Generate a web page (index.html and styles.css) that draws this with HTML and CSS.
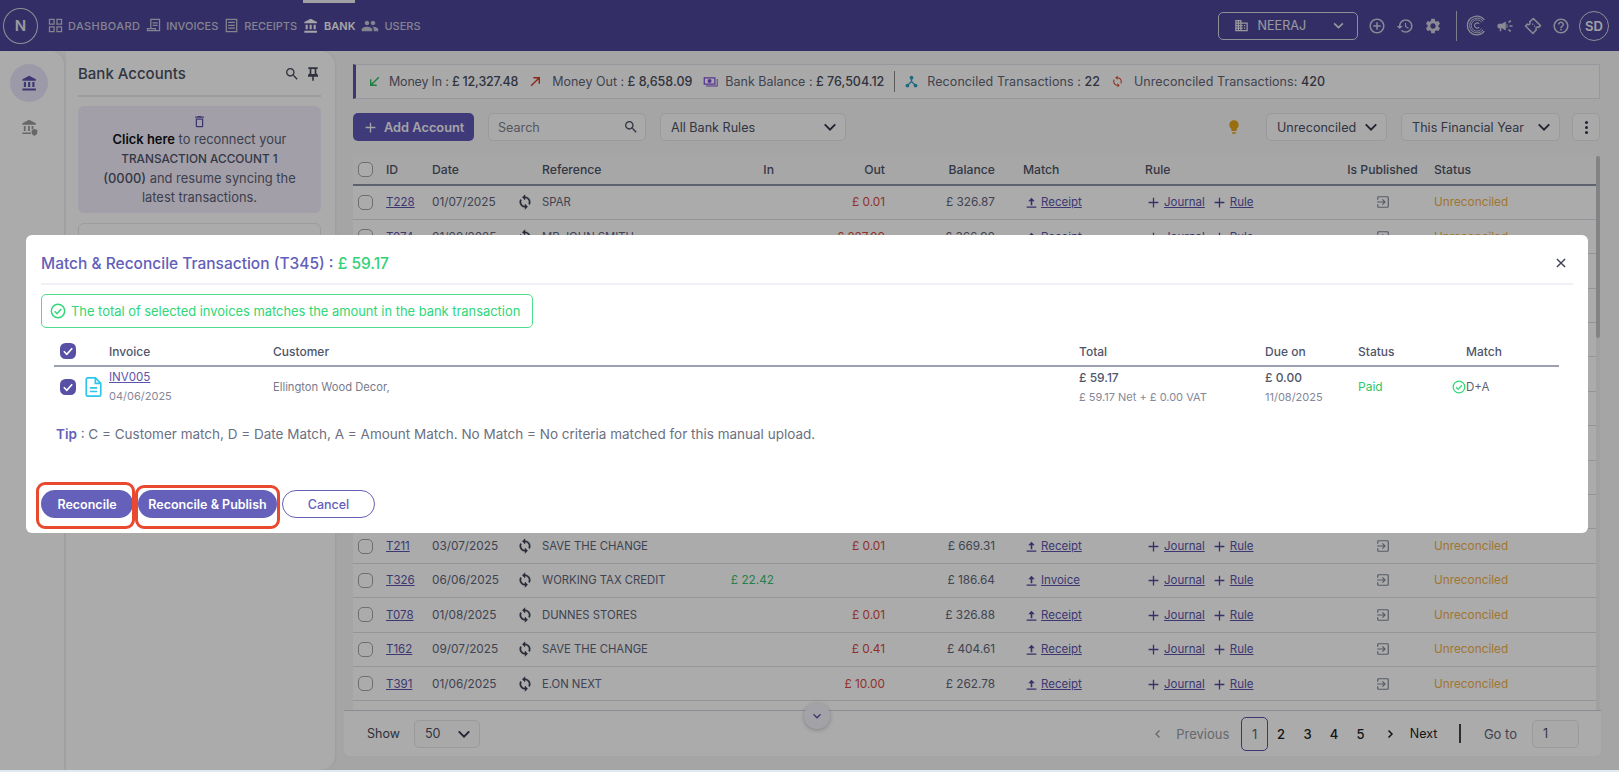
FILE: index.html
```html
<!DOCTYPE html>
<html lang="en">
<head>
<meta charset="utf-8">
<title>Bank - Match and Reconcile</title>
<link rel="stylesheet" href="styles.css">
</head>
<body>
<svg class="sprite" xmlns="http://www.w3.org/2000/svg">
  <symbol id="i-dash" viewBox="0 0 18 18"><path d="M1 1h7v7H1zM2.500 2.500v4h4v-4zM10 1h7v7h-7zM11.500 2.500v4h4v-4zM1 10h7v7H1zM2.500 11.500v4h4v-4zM10 10h7v7h-7zM11.500 11.500v4h4v-4z" fill-rule="evenodd"/></symbol>
  <symbol id="i-inv" viewBox="0 0 18 18"><path d="M5 1h12v15H1v-4h4zM6.500 2.500V12H12v2.500h3.500v-12zM8 5h6v1.500H8zM8 8h6v1.500H8zM2.500 13.500V14.500H10.500V13.500z" fill-rule="evenodd"/></symbol>
  <symbol id="i-rec" viewBox="0 0 18 18"><path d="M2 1h14v16H2zM3.500 2.500v13h11v-13zM5 4.500h8V6H5zM5 8h8v1.500H5zM5 11.500h8V13H5z" fill-rule="evenodd"/></symbol>
  <symbol id="i-bank" viewBox="0 0 24 24"><path d="M4 10v7h3v-7H4zm6 0v7h3v-7h-3zM2 22h19v-3H2v3zm14-12v7h3v-7h-3zm-4.500-9L2 6v2h19V6l-9.500-5z"/></symbol>
  <symbol id="i-bank2" viewBox="0 0 24 24"><path d="M4 10v7h2.500v-7H4zm6 0v7h2.500v-7H10zM2 21h12v-2H2v2zm13-11v4h2.500v-4H15zm-3.500-9L2 6v2h19V6l-9.500-5z"/><path d="M19 14l4 1.400v3.200c0 2.400-1.700 4.200-4 5-2.300-.8-4-2.600-4-5v-3.200z"/></symbol>
  <symbol id="i-group" viewBox="0 0 24 24"><path d="M16 11c1.660 0 2.990-1.340 2.990-3S17.660 5 16 5c-1.660 0-3 1.340-3 3s1.340 3 3 3zm-8 0c1.660 0 2.990-1.340 2.990-3S9.660 5 8 5C6.340 5 5 6.340 5 8s1.340 3 3 3zm0 2c-2.330 0-7 1.170-7 3.500V19h14v-2.500c0-2.330-4.670-3.500-7-3.500zm8 0c-.29 0-.62.02-.97.05 1.160.84 1.970 1.970 1.970 3.450V19h6v-2.500c0-2.330-4.670-3.500-7-3.500z"/></symbol>
  <symbol id="i-domain" viewBox="0 0 24 24"><path d="M12 7V3H2v18h20V7H12zM6 19H4v-2h2v2zm0-4H4v-2h2v2zm0-4H4V9h2v2zm0-4H4V5h2v2zm4 12H8v-2h2v2zm0-4H8v-2h2v2zm0-4H8V9h2v2zm0-4H8V5h2v2zm10 12h-8v-2h2v-2h-2v-2h2v-2h-2V9h8v10zm-2-8h-2v2h2v-2zm0 4h-2v2h2v-2z"/></symbol>
  <symbol id="i-addc" viewBox="0 0 24 24"><path d="M13 7h-2v4H7v2h4v4h2v-4h4v-2h-4V7zm-1-5C6.480 2 2 6.480 2 12s4.480 10 10 10 10-4.480 10-10S17.520 2 12 2zm0 18c-4.410 0-8-3.590-8-8s3.590-8 8-8 8 3.590 8 8-3.590 8-8 8z"/></symbol>
  <symbol id="i-hist" viewBox="0 0 24 24"><path d="M13 3c-4.970 0-9 4.030-9 9H1l3.890 3.890.07.14L9 12H6c0-3.870 3.130-7 7-7s7 3.130 7 7-3.130 7-7 7c-1.930 0-3.680-.79-4.940-2.060l-1.420 1.420C8.270 19.990 10.510 21 13 21c4.970 0 9-4.030 9-9s-4.030-9-9-9zm-1 5v5l4.280 2.540.72-1.210-3.500-2.080V8H12z"/></symbol>
  <symbol id="i-gear" viewBox="0 0 24 24"><path d="M19.140 12.940c.04-.3.06-.61.06-.94 0-.32-.02-.64-.07-.94l2.030-1.580c.18-.14.23-.41.12-.61l-1.920-3.320c-.12-.22-.37-.29-.59-.22l-2.390.96c-.5-.38-1.030-.7-1.620-.94l-.36-2.540c-.04-.24-.24-.41-.48-.41h-3.840c-.24 0-.43.17-.47.41l-.36 2.540c-.59.24-1.130.57-1.620.94l-2.390-.96c-.22-.08-.47 0-.59.22L2.740 8.870c-.12.21-.08.47.12.61l2.030 1.580c-.05.3-.09.63-.09.94s.02.64.07.94l-2.030 1.580c-.18.14-.23.41-.12.61l1.920 3.320c.12.22.37.29.59.22l2.390-.96c.5.38 1.030.7 1.620.94l.36 2.540c.05.24.24.41.48.41h3.840c.24 0 .44-.17.47-.41l.36-2.540c.59-.24 1.130-.56 1.620-.94l2.390.96c.22.08.47 0 .59-.22l1.920-3.320c.12-.22.07-.47-.12-.61l-2.010-1.580zM12 15.600c-1.980 0-3.600-1.620-3.600-3.600s1.620-3.600 3.600-3.600 3.600 1.620 3.600 3.600-1.620 3.600-3.600 3.600z"/></symbol>
  <symbol id="i-coin" viewBox="0 0 24 24"><g fill="none" stroke="currentColor"><path d="M21 5.500A10.800 10.800 0 1 0 21 18.500" stroke-width="1.400"/><path d="M19.500 7A8.500 8.500 0 1 0 19.500 17" stroke-width="1.100"/><path d="M18 8.500A6.500 6.500 0 1 0 18 15.500" stroke-width="1"/><path d="M15 10a3 3 0 1 0 0 4" stroke-width="1.300"/></g></symbol>
  <symbol id="i-mega" viewBox="0 0 24 24"><path d="M18 11v2h4v-2h-4zm-2 6.610c.96.71 2.210 1.650 3.200 2.390.4-.53.8-1.070 1.200-1.600-.99-.74-2.240-1.680-3.200-2.400-.4.54-.8 1.080-1.200 1.610zM20.400 5.600c-.4-.53-.8-1.070-1.200-1.600-.99.74-2.240 1.680-3.200 2.400.4.530.8 1.070 1.200 1.600.96-.72 2.210-1.650 3.200-2.400zM4 9c-1.100 0-2 .9-2 2v2c0 1.100.9 2 2 2h1v4h2v-4h1l5 3V6L8 9H4zm11.500 3c0-1.330-.58-2.530-1.500-3.350v6.690c.92-.81 1.500-2.010 1.500-3.340z"/></symbol>
  <symbol id="i-tick" viewBox="0 0 24 24"><g fill="none" stroke="currentColor" stroke-width="2" stroke-linejoin="round"><path d="M12.500 2l9.500 9.500-2.500 2.500a2 2 0 0 0-3 3L14 19.500l-2 2.500L2 12l2.500-2.500a2 2 0 0 0 3-3z"/><path d="M11 9l1.200 1.200M13.500 11.500l1.200 1.200" stroke-width="1.600"/></g></symbol>
  <symbol id="i-help" viewBox="0 0 24 24"><path d="M11 18h2v-2h-2v2zm1-16C6.480 2 2 6.480 2 12s4.480 10 10 10 10-4.480 10-10S17.520 2 12 2zm0 18c-4.410 0-8-3.590-8-8s3.590-8 8-8 8 3.590 8 8-3.590 8-8 8zm0-14c-2.210 0-4 1.790-4 4h2c0-1.100.9-2 2-2s2 .9 2 2c0 2-3 1.750-3 5h2c0-2.250 3-2.500 3-5 0-2.210-1.790-4-4-4z"/></symbol>
  <symbol id="i-search" viewBox="0 0 24 24"><path d="M15.500 14h-.79l-.28-.27C15.410 12.590 16 11.110 16 9.500 16 5.910 13.090 3 9.500 3S3 5.910 3 9.500 5.910 16 9.500 16c1.610 0 3.090-.59 4.230-1.570l.27.28v.79l5 4.990L20.490 19l-4.990-5zm-6 0C7.010 14 5 11.990 5 9.500S7.010 5 9.500 5 14 7.010 14 9.500 11.990 14 9.500 14z"/></symbol>
  <symbol id="i-pin" viewBox="0 0 24 24"><path d="M5 2h14v2.500h-2V11l2.500 2.500V16h-6.300v6h-2.400v-6H4.500v-2.500L7 11V4.500H5zM9.500 4.500V12h5V4.500z" fill-rule="evenodd"/></symbol>
  <symbol id="i-trash" viewBox="0 0 24 24"><path d="M6 19c0 1.100.9 2 2 2h8c1.100 0 2-.9 2-2V7H6v12zM8 9h8v10H8V9zm7.500-5l-1-1h-5l-1 1H5v2h14V4z"/></symbol>
  <symbol id="i-sync" viewBox="0 0 24 24"><path d="M12 4V1L8 5l4 4V6c3.310 0 6 2.690 6 6 0 1.010-.25 1.970-.7 2.800l1.460 1.460C19.540 15.030 20 13.570 20 12c0-4.420-3.580-8-8-8zm0 14c-3.310 0-6-2.690-6-6 0-1.010.25-1.970.7-2.800L5.240 7.740C4.460 8.970 4 10.430 4 12c0 4.420 3.580 8 8 8v3l4-4-4-4v3z"/></symbol>
  <symbol id="i-up" viewBox="0 0 24 24"><path d="M3 19.500h18v2.200H3zM12 3l6 6.500h-4.500V17h-3V9.500H6z"/></symbol>
  <symbol id="i-plus" viewBox="0 0 24 24"><path d="M10.800 3h2.400v7.800H21v2.400h-7.800V21h-2.400v-7.800H3v-2.400h7.800z"/></symbol>
  <symbol id="i-login" viewBox="0 0 24 24"><g fill="none" stroke="currentColor" stroke-width="2"><path d="M3 8V4.500A1.500 1.500 0 0 1 4.500 3h15A1.500 1.500 0 0 1 21 4.500v15a1.500 1.500 0 0 1-1.500 1.500h-15A1.500 1.500 0 0 1 3 19.500V16"/><path d="M2 12h13M11 7.500l4.500 4.500-4.500 4.500"/></g></symbol>
  <symbol id="i-chev" viewBox="0 0 24 24"><path d="M5 8.500l7 7 7-7" fill="none" stroke="currentColor" stroke-width="2.600"/></symbol>
  <symbol id="i-check" viewBox="0 0 24 24"><g fill="none" stroke="currentColor" stroke-width="2.200"><circle cx="12" cy="12" r="10"/><path d="M7 12.500l3.500 3.500 6.500-7"/></g></symbol>
  <symbol id="i-tbox" viewBox="0 0 16 16"><rect x="0" y="0" width="16" height="16" rx="5.500" fill="#5750a4"/><path d="M3.800 8.300l3 3 5.400-6" fill="none" stroke="#fff" stroke-width="1.600"/></symbol>
</svg>

<div class="app">
  <header class="topbar">
    <div class="logo">N</div>
    <nav class="nav">
      <a class="nav-item nav-first"><svg class="nav-ic"><use href="#i-dash"/></svg>DASHBOARD</a>
      <a class="nav-item"><svg class="nav-ic"><use href="#i-inv"/></svg>INVOICES</a>
      <a class="nav-item"><svg class="nav-ic"><use href="#i-rec"/></svg>RECEIPTS</a>
      <a class="nav-item nav-active"><svg class="nav-ic"><use href="#i-bank"/></svg>BANK</a>
      <a class="nav-item"><svg class="nav-ic nav-ic-wide"><use href="#i-group"/></svg>USERS</a>
    </nav>
    <div class="top-right">
      <div class="org-select">
        <svg class="org-ic"><use href="#i-domain"/></svg>
        <span class="org-name">NEERAJ</span>
        <svg class="org-chev"><use href="#i-chev"/></svg>
      </div>
      <svg class="top-ic"><use href="#i-addc"/></svg>
      <svg class="top-ic"><use href="#i-hist"/></svg>
      <svg class="top-ic"><use href="#i-gear"/></svg>
      <span class="top-div"></span>
      <svg class="top-ic top-ic-coin"><use href="#i-coin"/></svg>
      <svg class="top-ic"><use href="#i-mega"/></svg>
      <svg class="top-ic"><use href="#i-tick"/></svg>
      <svg class="top-ic"><use href="#i-help"/></svg>
      <div class="avatar">SD</div>
    </div>
  </header>

  <div class="body-row">
    <aside class="rail">
      <div class="rail-on"><svg class="rail-ic"><use href="#i-bank"/></svg></div>
      <svg class="rail-ic rail-off"><use href="#i-bank2"/></svg>
    </aside>

    <section class="accounts">
      <div class="acc-head">
        <h2 class="acc-title">Bank Accounts</h2>
        <svg class="acc-ic"><use href="#i-search"/></svg>
        <svg class="acc-ic"><use href="#i-pin"/></svg>
      </div>
      <div class="callout">
        <svg class="callout-ic"><use href="#i-trash"/></svg>
        <p class="callout-text"><b>Click here</b> to reconnect your<br><span class="callout-strong">TRANSACTION ACCOUNT 1</span><br><span class="callout-zero">(0000)</span> and resume syncing the<br>latest transactions.</p>
      </div>
      <div class="acc-card"></div>
    </section>

    <main class="main">
      <div class="stats">
        <svg class="st-ic st-in" viewBox="0 0 24 24"><path d="M20 4L5 19M5 8v11h11" fill="none" stroke="currentColor" stroke-width="2.600"/></svg>
        <span class="st-text st-first">Money In : <b>£ 12,327.48</b></span>
        <svg class="st-ic st-out" viewBox="0 0 24 24"><path d="M4 20L19 5M8 5h11v11" fill="none" stroke="currentColor" stroke-width="2.600"/></svg>
        <span class="st-text">Money Out : <b>£ 8,658.09</b></span>
        <svg class="st-ic st-bal" viewBox="0 0 24 24"><path d="M1 5h19v12H1zM3 7v8h15V7zM22 8h1.500v12H5v-1.500h17z" fill-rule="evenodd"/><circle cx="10.500" cy="11" r="3.200"/></svg>
        <span class="st-text">Bank Balance : <b>£ 76,504.12</b></span>
        <span class="st-div"></span>
        <svg class="st-ic st-hub" viewBox="0 0 24 24"><path d="M12 5v7M12 12l-7 7M12 12l7 7" fill="none" stroke="currentColor" stroke-width="2.400"/><circle cx="12" cy="5" r="3.500"/><circle cx="4.500" cy="19.500" r="3.500"/><circle cx="19.500" cy="19.500" r="3.500"/></svg>
        <span class="st-text st-wide">Reconciled Transactions : <b>22</b></span>
        <svg class="st-ic st-unrec" viewBox="0 0 24 24"><path d="M12 4V1L8 5l4 4V6c3.310 0 6 2.690 6 6 0 1.010-.25 1.970-.7 2.800l1.460 1.460C19.540 15.030 20 13.570 20 12c0-4.420-3.580-8-8-8zm0 14c-3.310 0-6-2.690-6-6 0-1.010.25-1.970.7-2.800L5.240 7.740C4.460 8.970 4 10.430 4 12c0 4.420 3.580 8 8 8v3l4-4-4-4v3z"/></svg>
        <span class="st-text st-wide">Unreconciled Transactions: <b>420</b></span>
      </div>

      <div class="toolbar">
        <button class="add-btn"><svg class="add-ic"><use href="#i-plus"/></svg>Add Account</button>
        <div class="field field-search"><span class="ph">Search</span><svg class="field-ic"><use href="#i-search"/></svg></div>
        <div class="field field-rules"><span>All Bank Rules</span><svg class="field-chev"><use href="#i-chev"/></svg></div>
        <svg class="bulb" viewBox="0 0 24 24"><path d="M9 21c0 .55.45 1 1 1h4c.55 0 1-.45 1-1v-1H9v1zm3-19C8.140 2 5 5.140 5 9c0 2.380 1.190 4.470 3 5.740V17c0 .55.45 1 1 1h6c.55 0 1-.45 1-1v-2.260c1.810-1.270 3-3.360 3-5.740 0-3.860-3.140-7-7-7z"/></svg>
        <div class="field field-status"><span>Unreconciled</span><svg class="field-chev"><use href="#i-chev"/></svg></div>
        <div class="field field-year"><span>This Financial Year</span><svg class="field-chev"><use href="#i-chev"/></svg></div>
        <div class="field field-more"><span class="dots"></span></div>
      </div>

      <div class="table-wrap">
        <div class="table-scroll">
          <table class="tx">
            <colgroup>
              <col class="c-chk"><col class="c-id"><col class="c-date"><col class="c-sync"><col class="c-ref"><col class="c-in"><col class="c-out"><col class="c-bal"><col class="c-match"><col class="c-rule"><col class="c-pub"><col class="c-stat">
            </colgroup>
            <thead>
              <tr><th class="td-chk"><span class="box"></span></th><th>ID</th><th>Date</th><th></th><th>Reference</th><th class="num">In</th><th class="num">Out</th><th class="num">Balance</th><th class="td-match">Match</th><th>Rule</th><th class="ctr">Is Published</th><th>Status</th></tr>
            </thead>
            <tbody>
              <tr><td class="td-chk"><span class="box"></span></td><td><a class="lnk">T228</a></td><td>01/07/2025</td><td><svg class="sync"><use href="#i-sync"/></svg></td><td class="ref">SPAR</td><td class="num"></td><td class="num out">£ 0.01</td><td class="num">£ 326.87</td><td class="td-match"><svg class="mini"><use href="#i-up"/></svg><a class="lnk">Receipt</a></td><td class="td-rule"><svg class="mini"><use href="#i-plus"/></svg><a class="lnk lnk-j">Journal</a><svg class="mini"><use href="#i-plus"/></svg><a class="lnk">Rule</a></td><td class="ctr"><svg class="pub"><use href="#i-login"/></svg></td><td class="unrec">Unreconciled</td></tr>
              <tr><td class="td-chk"><span class="box"></span></td><td><a class="lnk">T074</a></td><td>01/08/2025</td><td><svg class="sync"><use href="#i-sync"/></svg></td><td class="ref">MR JOHN SMITH</td><td class="num"></td><td class="num out">£ 227.00</td><td class="num">£ 366.90</td><td class="td-match"><svg class="mini"><use href="#i-up"/></svg><a class="lnk">Receipt</a></td><td class="td-rule"><svg class="mini"><use href="#i-plus"/></svg><a class="lnk lnk-j">Journal</a><svg class="mini"><use href="#i-plus"/></svg><a class="lnk">Rule</a></td><td class="ctr"><svg class="pub"><use href="#i-login"/></svg></td><td class="unrec">Unreconciled</td></tr>
              <tr class="blank"><td colspan="12"></td></tr>
              <tr class="blank"><td colspan="12"></td></tr>
              <tr class="blank"><td colspan="12"></td></tr>
              <tr class="blank"><td colspan="12"></td></tr>
              <tr class="blank"><td colspan="12"></td></tr>
              <tr class="blank"><td colspan="12"></td></tr>
              <tr class="blank"><td colspan="12"></td></tr>
              <tr class="blank"><td colspan="12"></td></tr>
              <tr><td class="td-chk"><span class="box"></span></td><td><a class="lnk">T211</a></td><td>03/07/2025</td><td><svg class="sync"><use href="#i-sync"/></svg></td><td class="ref">SAVE THE CHANGE</td><td class="num"></td><td class="num out">£ 0.01</td><td class="num">£ 669.31</td><td class="td-match"><svg class="mini"><use href="#i-up"/></svg><a class="lnk">Receipt</a></td><td class="td-rule"><svg class="mini"><use href="#i-plus"/></svg><a class="lnk lnk-j">Journal</a><svg class="mini"><use href="#i-plus"/></svg><a class="lnk">Rule</a></td><td class="ctr"><svg class="pub"><use href="#i-login"/></svg></td><td class="unrec">Unreconciled</td></tr>
              <tr><td class="td-chk"><span class="box"></span></td><td><a class="lnk">T326</a></td><td>06/06/2025</td><td><svg class="sync"><use href="#i-sync"/></svg></td><td class="ref">WORKING TAX CREDIT</td><td class="num in">£ 22.42</td><td class="num"></td><td class="num">£ 186.64</td><td class="td-match"><svg class="mini"><use href="#i-up"/></svg><a class="lnk">Invoice</a></td><td class="td-rule"><svg class="mini"><use href="#i-plus"/></svg><a class="lnk lnk-j">Journal</a><svg class="mini"><use href="#i-plus"/></svg><a class="lnk">Rule</a></td><td class="ctr"><svg class="pub"><use href="#i-login"/></svg></td><td class="unrec">Unreconciled</td></tr>
              <tr><td class="td-chk"><span class="box"></span></td><td><a class="lnk">T078</a></td><td>01/08/2025</td><td><svg class="sync"><use href="#i-sync"/></svg></td><td class="ref">DUNNES STORES</td><td class="num"></td><td class="num out">£ 0.01</td><td class="num">£ 326.88</td><td class="td-match"><svg class="mini"><use href="#i-up"/></svg><a class="lnk">Receipt</a></td><td class="td-rule"><svg class="mini"><use href="#i-plus"/></svg><a class="lnk lnk-j">Journal</a><svg class="mini"><use href="#i-plus"/></svg><a class="lnk">Rule</a></td><td class="ctr"><svg class="pub"><use href="#i-login"/></svg></td><td class="unrec">Unreconciled</td></tr>
              <tr><td class="td-chk"><span class="box"></span></td><td><a class="lnk">T162</a></td><td>09/07/2025</td><td><svg class="sync"><use href="#i-sync"/></svg></td><td class="ref">SAVE THE CHANGE</td><td class="num"></td><td class="num out">£ 0.41</td><td class="num">£ 404.61</td><td class="td-match"><svg class="mini"><use href="#i-up"/></svg><a class="lnk">Receipt</a></td><td class="td-rule"><svg class="mini"><use href="#i-plus"/></svg><a class="lnk lnk-j">Journal</a><svg class="mini"><use href="#i-plus"/></svg><a class="lnk">Rule</a></td><td class="ctr"><svg class="pub"><use href="#i-login"/></svg></td><td class="unrec">Unreconciled</td></tr>
              <tr><td class="td-chk"><span class="box"></span></td><td><a class="lnk">T391</a></td><td>01/06/2025</td><td><svg class="sync"><use href="#i-sync"/></svg></td><td class="ref">E.ON NEXT</td><td class="num"></td><td class="num out">£ 10.00</td><td class="num">£ 262.78</td><td class="td-match"><svg class="mini"><use href="#i-up"/></svg><a class="lnk">Receipt</a></td><td class="td-rule"><svg class="mini"><use href="#i-plus"/></svg><a class="lnk lnk-j">Journal</a><svg class="mini"><use href="#i-plus"/></svg><a class="lnk">Rule</a></td><td class="ctr"><svg class="pub"><use href="#i-login"/></svg></td><td class="unrec">Unreconciled</td></tr>
            </tbody>
          </table>
        </div>
        <div class="scrollbar"><div class="thumb"></div></div>
      </div>

      <footer class="pager">
        <span class="show">Show</span>
        <div class="field field-size"><span>50</span><svg class="field-chev"><use href="#i-chev"/></svg></div>
        <div class="pages">
          <svg class="pg-arrow pg-off" viewBox="0 0 24 24"><path d="M15 5l-7 7 7 7" fill="none" stroke="currentColor" stroke-width="2.600"/></svg>
          <span class="pg-prev">Previous</span>
          <span class="pg pg-on">1</span><span class="pg">2</span><span class="pg">3</span><span class="pg">4</span><span class="pg">5</span>
          <svg class="pg-arrow pg-next-ic" viewBox="0 0 24 24"><path d="M9 5l7 7-7 7" fill="none" stroke="currentColor" stroke-width="3"/></svg>
          <span class="pg-next">Next</span>
          <span class="pg-div"></span>
          <span class="goto">Go to</span>
          <div class="field field-goto"><span>1</span></div>
        </div>
      </footer>
      <div class="scroll-down"><svg class="sd-ic"><use href="#i-chev"/></svg></div>
    </main>
  </div>
  <div class="edge"></div>

  <div class="backdrop"></div>

  <section class="modal">
    <div class="m-head">
      <h1 class="m-title">Match &amp; Reconcile Transaction (T345) : <span class="m-amt">£ 59.17</span></h1>
      <svg class="m-close" viewBox="0 0 24 24"><path d="M5 5l14 14M19 5L5 19" fill="none" stroke="currentColor" stroke-width="2.400"/></svg>
    </div>
    <div class="m-alert"><svg class="m-alert-ic"><use href="#i-check"/></svg>The total of selected invoices matches the amount in the bank transaction</div>
    <div class="m-grid m-grid-head">
      <div><svg class="tbox"><use href="#i-tbox"/></svg></div><div>Invoice</div><div>Customer</div><div>Total</div><div>Due on</div><div>Status</div><div class="m-match-h">Match</div>
    </div>
    <div class="m-grid m-grid-row">
      <div class="m-chk"><svg class="tbox"><use href="#i-tbox"/></svg><svg class="doc" viewBox="0 0 18 22"><path d="M2.500 1h8.500l6 6v12.500a1.500 1.500 0 0 1-1.500 1.500h-13A1.500 1.500 0 0 1 1 19.500v-17A1.500 1.500 0 0 1 2.500 1z" fill="none" stroke="currentColor" stroke-width="1.800"/><path d="M11 1v6h6M5 12h8M5 16h8" fill="none" stroke="currentColor" stroke-width="1.800"/></svg></div>
      <div><a class="lnk m-inv">INV005</a><div class="m-sub">04/06/2025</div></div>
      <div class="m-cust">Ellington Wood Decor,</div>
      <div><div class="m-strong">£ 59.17</div><div class="m-sub">£ 59.17 Net + £ 0.00 VAT</div></div>
      <div><div class="m-strong">£ 0.00</div><div class="m-sub">11/08/2025</div></div>
      <div class="m-paid">Paid</div>
      <div class="m-crit"><svg class="m-crit-ic"><use href="#i-check"/></svg>D+A</div>
    </div>
    <p class="m-tip"><span class="m-tip-key">Tip</span> : C = Customer match, D = Date Match, A = Amount Match. No Match = No criteria matched for this manual upload.</p>
    <div class="m-actions">
      <button class="btn-p btn-rec">Reconcile</button>
      <button class="btn-p btn-pub">Reconcile &amp; Publish</button>
      <button class="btn-c">Cancel</button>
    </div>
    <span class="mark mark-a"></span>
    <span class="mark mark-b"></span>
  </section>
</div>
</body>
</html>
```

FILE: styles.css
```css
* { box-sizing: border-box; }
html, body { margin: 0; padding: 0; height: 100%; overflow: hidden; }
body { font-family: Inter, "Open Sans", sans-serif; color: #555a6e; background: #fff; }
.sprite { position: absolute; width: 0; height: 0; }
svg { fill: currentColor; display: block; flex: none; }
p, h1, h2 { margin: 0; font-weight: 400; }
a { color: inherit; }
button { font-family: inherit; border: 0; padding: 0; }

.app { position: relative; width: 1619px; height: 772px; display: flex; flex-direction: column; overflow: hidden; background: #f6f6f8; }

/* top bar */
.topbar { height: 51px; flex: none; display: flex; align-items: center; background: #4d4599; color: #fff; padding: 0 10px 0 3px; }
.logo { width: 35px; height: 36px; border: 1.500px solid #d5d5dd; border-radius: 50%; display: flex; align-items: center; justify-content: center; font-size: 15px; font-weight: 600; color: #e4e4ea; }
.nav { display: flex; align-items: center; margin-left: 10px; gap: 6px; height: 100%; }
.nav-item { position: relative; display: flex; align-items: center; gap: 5px; font-size: 11px; font-weight: 500; color: #c6c4d6; height: 100%; }
.nav-first { letter-spacing: .4px; }
.nav-ic { width: 15px; height: 15px; color: #c6c4d6; }
.nav-ic-wide { width: 18px; height: 18px; }
.nav-active { color: #f6f6fa; font-weight: 600; }
.nav-active .nav-ic { color: #f6f6fa; width: 16px; height: 16px; }
.nav-active::before { content: ""; position: absolute; left: 0; right: 0; top: 0; height: 3px; background: #f0f0f4; }
.top-right { margin-left: auto; display: flex; align-items: center; }
.org-select { width: 140px; height: 28px; border: 1px solid #d5d5dd; border-radius: 5px; display: flex; align-items: center; padding: 0 11px 0 15px; margin-right: 10px; color: #e5e5ec; }
.org-ic { width: 15px; height: 15px; }
.org-name { font-size: 12.600px; font-weight: 400; margin-left: 9px; }
.org-chev { width: 15px; height: 15px; margin-left: auto; }
.top-ic { width: 18px; height: 18px; margin-right: 10px; color: #cfcedd; }
.top-div { width: 1.500px; height: 30px; background: #bcbace; margin: 0 9px 0 4px; }
.top-ic-coin { width: 21px; height: 21px; margin-right: 9px; }
.avatar { width: 30px; height: 30px; margin-left: -1px; border: 1.500px solid #d5d5dd; border-radius: 50%; display: flex; align-items: center; justify-content: center; font-size: 13px; font-weight: 600; color: #f0f0f4; }

/* shell */
.body-row { flex: 1; min-height: 0; display: flex; position: relative; }
.edge { height: 2px; flex: none; background: #dfe9f0; position: relative; z-index: 3; }
.rail { width: 64px; flex: none; background: #fff; border-radius: 0 14px 0 0; box-shadow: 1px 0 3px rgba(0,0,0,.05); display: flex; flex-direction: column; align-items: center; padding: 13px 6px 0 0; }
.rail-on { width: 38px; height: 38px; border-radius: 50%; background: #e9e6fb; display: flex; align-items: center; justify-content: center; color: #5a52a8; }
.rail-ic { width: 17px; height: 17px; }
.rail-off { color: #9a9a9a; margin-top: 17px; }
.accounts { width: 269px; flex: none; margin-left: 2px; background: #fff; border-radius: 0 15px 15px 0; padding: 0 14px 0 12px; box-shadow: 1px 0 3px rgba(0,0,0,.05); }
.acc-head { height: 46px; border-bottom: 2px solid #e8e8ec; display: flex; align-items: center; padding-top: 1px; }
.acc-title { font-size: 15px; font-weight: 500; color: #4a4f62; margin-right: auto; }
.acc-ic { width: 16px; height: 16px; color: #474b5c; margin-left: 5px; }
.callout { margin-top: 9px; height: 107px; border-radius: 6px; background: #f2eefd; display: flex; flex-direction: column; align-items: center; padding-top: 8px; }
.callout-ic { width: 15px; height: 15px; color: #5a52a8; }
.callout-text { font-size: 12.900px; line-height: 19px; text-align: center; margin-top: 1px; color: #5a5f72; }
.callout-text b { color: #111; font-weight: 600; }
.callout-strong { color: #4e5368; font-weight: 500; font-size: 11.800px; }
.callout-zero { color: #4e5368; font-weight: 500; }
.acc-card { margin-top: 10px; height: 120px; border: 1px solid #eaeaee; border-radius: 6px; }

/* main column */
.main { flex: 1; min-width: 0; position: relative; padding: 13px 19px 14px 18px; display: flex; flex-direction: column; }
.stats { height: 35px; flex: none; background: #fdfdfe; border: 1px solid #e2e2ea; border-left: 3px solid #5a52a8; display: flex; align-items: center; padding-left: 12px; font-size: 12.500px; color: #5f6475; }
.stats b { font-weight: 500; color: #484c5c; }
.st-ic { width: 13px; height: 13px; margin-right: 10px; }
.st-text { white-space: nowrap; margin-right: 11px; }
.st-first { letter-spacing: -.2px; }
.st-wide { letter-spacing: .07px; }
.st-in { color: #2dbb5e; margin-right: 8px; }
.st-out { color: #d0392a; }
.st-bal { color: #7c4fd6; width: 15px; height: 15px; margin-right: 7px; }
.st-hub { color: #2ba0c4; margin-right: 9px; }
.st-div { width: 1px; height: 21px; background: #888; margin-right: 10px; margin-left: -1px; }
.st-unrec { color: #d9472b; }

.toolbar { height: 28px; flex: none; margin-top: 14px; display: flex; align-items: center; }
.add-btn { width: 121px; height: 28px; border-radius: 5px; background: #5f57b5; color: #f4f4fa; font-size: 12.800px; font-weight: 600; display: flex; align-items: center; padding-left: 11px; gap: 7px; }
.add-ic { width: 13px; height: 13px; }
.field { height: 28px; background: #fdfdfe; border: 1px solid #e6e6ec; border-radius: 5px; display: flex; align-items: center; font-size: 12.600px; color: #4b5062; padding: 0 6px 0 10px; }
.field-search { width: 158px; margin-left: 14px; padding-left: 9px; }
.ph { color: #7e8190; margin-right: auto; }
.field-ic { width: 16px; height: 16px; color: #4b5062; }
.field-chev { width: 18px; height: 18px; margin-left: auto; color: #333748; }
.field-rules { width: 186px; margin-left: 14px; }
.bulb { width: 16px; height: 16px; color: #e3a517; margin-left: auto; margin-right: 24px; }
.field-status { width: 121px; }
.field-year { width: 159px; margin-left: 14px; }
.field-more { width: 28px; margin-left: 12px; justify-content: center; padding: 0; }
.dots { width: 3px; height: 3px; border-radius: 50%; background: #333748; box-shadow: 0 -5px 0 #333748, 0 5px 0 #333748; }

.table-wrap { flex: 1; min-height: 0; margin-top: 15px; display: flex; }
.table-scroll { width: 1243px; flex: none; overflow: hidden; background: #fff; }
.scrollbar { width: 4px; background: #f0f0f2; }
.thumb { height: 182px; background: #c4c4c8; border-radius: 3px; }

.tx { width: 1243px; table-layout: fixed; border-collapse: collapse; font-size: 11.800px; color: #60657a; }
.c-chk { width: 33px; } .c-id { width: 46px; } .c-date { width: 85px; } .c-sync { width: 25px; } .c-ref { width: 158px; } .c-in { width: 74px; } .c-out { width: 111px; } .c-bal { width: 110px; } .c-match { width: 150px; } .c-rule { width: 186px; } .c-pub { width: 103px; } .c-stat { width: 162px; }
.tx th { height: 29px; font-size: 12.200px; font-weight: 500; text-align: left; color: #4e5366; padding: 0 0 2px; border-bottom: 2px solid #8d93a6; background: #f9f9fb; }
.tx td { height: 34.400px; padding: 0; border-bottom: 1px solid #dcdee5; white-space: nowrap; }
.tx .td-chk { padding-left: 5px; }
.box { display: block; width: 15px; height: 15px; border: 1.500px solid #a2a4ae; border-radius: 5px; background: #fff; }
.lnk { color: #5c54ab; text-decoration: underline; }
.sync { width: 16px; height: 16px; color: #3c4050; stroke: currentColor; stroke-width: .6px; }
.ref { font-size: 11.300px; }
.tx .num { text-align: right; }
.tx .in { color: #3abf70; }
.tx .out { color: #d84a3d; }
.tx .td-match { padding-left: 28px; }
.tx .td-rule { padding-left: 2px; }
.mini { display: inline-block; vertical-align: -3px; width: 13px; height: 13px; margin-right: 4px; color: #514a9d; }
.td-match .mini { margin: 0 3px 0 2px; }
.lnk-j { margin-right: 8px; }
.tx .lnk { font-size: 11.500px; }
.tx .ctr { text-align: center; }
.pub { width: 14px; height: 14px; color: #7f8697; margin: 0 auto; }
.tx .unrec { color: #f2b04a; }

.pager { height: 46px; flex: none; margin: 0 -1px 0 -9px; background: #fff; border-top: 1px solid #cfd1d8; border-radius: 0 0 6px 6px; display: flex; align-items: center; padding: 0 22px 0 23px; font-size: 12.500px; color: #444858; }
.show { margin-right: 14px; }
.field-size { width: 66px; }
.pages { margin-left: auto; display: flex; align-items: center; font-size: 13px; color: #222; }
.pg-arrow { width: 12px; height: 12px; }
.pg-off { color: #9a9aa2; }
.pg-prev { color: #9a9aa2; margin-left: 12px; margin-right: 12px; }
.pg { width: 26.500px; height: 34px; display: flex; align-items: center; justify-content: center; font-weight: 500; }
.pg-on { border: 1.500px solid #5a52a8; border-radius: 5px; color: #5f6475; font-weight: 400; }
.pg-next-ic { margin-left: 10px; color: #222; }
.pg-next { margin-left: 14px; font-size: 12.500px; }
.pg-div { width: 1.500px; height: 19px; background: #444; margin: 0 23px 0 22px; }
.goto { color: #5f6475; margin-right: 15px; }
.field-goto { width: 47px; }
.scroll-down { position: absolute; left: 469px; top: 652px; width: 26px; height: 26px; border-radius: 50%; background: #f4f2fc; box-shadow: 0 1px 4px rgba(0,0,0,.25); display: flex; align-items: center; justify-content: center; color: #5a52a8; }
.sd-ic { width: 12px; height: 12px; }

/* modal layer */
.backdrop { position: absolute; left: 0; top: 0; right: 0; height: 770px; background: rgba(0,0,0,.33); z-index: 4; }
.modal { position: absolute; left: 26px; top: 235px; width: 1562px; height: 298px; background: #fff; border-radius: 6px; z-index: 5; padding: 0 15px; display: flex; flex-direction: column; }
.m-head { height: 50px; flex: none; border-bottom: 2px solid #f0f0f6; display: flex; align-items: center; justify-content: space-between; padding-top: 8px; padding-right: 5px; }
.m-title { font-size: 15.500px; font-weight: 500; color: #635eb9; }
.m-amt { color: #33d17a; }
.m-close { width: 14px; height: 14px; color: #3e4254; }
.m-alert { margin-top: 9px; width: 492px; height: 34px; flex: none; border: 1px solid #4ede8c; border-radius: 5px; display: flex; align-items: center; padding-left: 8px; gap: 5px; font-size: 12.900px; color: #2fd777; white-space: nowrap; }
.m-alert-ic { width: 16px; height: 16px; }
.m-grid { display: grid; grid-template-columns: 55px 164px 806px 186px 93px 94px 108px; margin: 0 14px 0 13px; }
.m-grid-head { margin-top: 9px; height: 30px; flex: none; align-items: center; font-size: 12px; font-weight: 500; color: #50556a; border-bottom: 2px solid #9da0b0; }
.m-grid-head > div:first-child { padding-left: 6px; }
.m-match-h { padding-left: 14px; }
.tbox { width: 16px; height: 16px; }
.m-grid-row { height: 39px; flex: none; align-items: center; font-size: 11px; }
.m-chk { padding-left: 6px; display: flex; align-items: center; gap: 9px; margin-right: -40px; }
.m-inv { font-size: 11.600px; }
.m-sub { font-size: 11px; color: #85889a; margin-top: 5px; white-space: nowrap; }
.m-cust { color: #777b8c; font-size: 11.200px; }
.m-strong { font-size: 12px; font-weight: 500; color: #50556a; }
.m-paid { color: #2fc767; font-size: 12px; }
.m-crit { display: flex; align-items: center; color: #5a5f72; font-size: 11.500px; }
.m-crit-ic { width: 14px; height: 14px; color: #2fd777; }
.doc { width: 17px; height: 20px; color: #2cc5ec; }
.m-tip { margin: 0 0 0 15px; padding-top: 20px; font-size: 13.500px; color: #6b7082; white-space: nowrap; }
.m-tip-key { color: #635eb9; font-weight: 600; }
.m-actions { margin-top: auto; margin-bottom: 15px; display: flex; gap: 5px; }
.btn-p { height: 28px; border-radius: 14px; background: #6560ba; color: #fff; font-size: 12.500px; font-weight: 600; }
.btn-rec { width: 92px; }
.btn-pub { width: 139px; }
.btn-c { width: 93px; height: 28px; border-radius: 14px; background: #fff; border: 1px solid #6560ba; color: #6560ba; font-size: 12.500px; font-weight: 500; }
.mark { position: absolute; border: 3px solid #e8492f; border-radius: 9px; }
.mark-a { left: 10px; top: 247px; width: 99px; height: 47px; }
.mark-b { left: 109px; top: 250px; width: 145px; height: 44px; }
```
